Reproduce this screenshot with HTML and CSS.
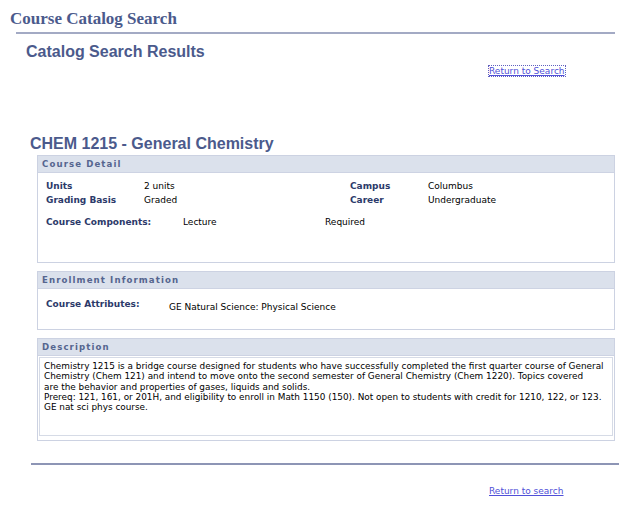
FILE: index.html
```html
<!DOCTYPE html>
<html lang="en">
  <head>
    <meta charset="UTF-8" />
    <title>Course Catalog Search</title>
    <link rel="stylesheet" href="styles.css">
  </head>
  <body>
    <div class="pagetitle">Course Catalog Search</div>
    <hr class="rule top" />
    <h1 class="subtitle">Catalog Search Results</h1>
    <div class="toplink"><a href="#" class="focused">Return to Search</a></div>

    <h2 class="course">CHEM 1215 - General Chemistry</h2>

    <div class="group detail">
      <div class="grouphead">Course Detail</div>
      <div class="groupbody">
        <div class="pairs">
          <div class="pair"><span class="lbl">Units</span><span class="val">2 units</span></div>
          <div class="pair right"><span class="lbl">Campus</span><span class="val">Columbus</span></div>
          <div class="pair"><span class="lbl">Grading Basis</span><span class="val">Graded</span></div>
          <div class="pair right"><span class="lbl">Career</span><span class="val">Undergraduate</span></div>
        </div>
        <div class="components">
          <span class="lbl">Course Components:</span>
          <span class="val comp">Lecture</span>
          <span class="val">Required</span>
        </div>
      </div>
    </div>

    <div class="group enroll">
      <div class="grouphead">Enrollment Information</div>
      <div class="groupbody">
        <div class="attrs">
          <span class="lbl">Course Attributes:</span>
          <span class="val">GE Natural Science: Physical Science</span>
        </div>
      </div>
    </div>

    <div class="group desc">
      <div class="grouphead">Description</div>
      <div class="descbox">Chemistry 1215 is a bridge course designed for students who have successfully completed the first quarter course of General Chemistry (Chem 121) and intend to move onto the second semester of General Chemistry (Chem 1220). Topics covered<br>are the behavior and properties of gases, liquids and solids.<br>Prereq: 121, 161, or 201H, and eligibility to enroll in Math 1150 (150). Not open to students with credit for 1210, 122, or 123. GE nat sci phys course.</div>
    </div>

    <hr class="rule bottom" />
    <div class="footlink"><a href="#">Return to search</a></div>
  </body>
</html>
```

FILE: styles.css
```css
body {
  margin: 0;
  width: 640px;
  font-family: "DejaVu Sans", Verdana, sans-serif;
  font-size: 9px;
  color: #000;
  background: #fff;
}

.pagetitle {
  font-family: "Liberation Serif", serif;
  font-weight: bold;
  font-size: 17px;
  color: #4b5a8c;
  padding: 9px 0 0 10px;
  height: 23px;
}

.rule {
  border: 0;
  height: 2px;
  background: #a3aac4;
  margin: 0;
}

.rule.top {
  margin-left: 16px;
  width: 599px;
}

.subtitle {
  font-family: "Liberation Sans", Arial, sans-serif;
  font-size: 16px;
  font-weight: bold;
  color: #4b5a8c;
  margin: 9px 0 0 26px;
}

.toplink {
  margin: 5px 0 0 489px;
}

a {
  color: #5050d8;
  font-size: 9px;
}

a.focused {
  outline: 1px dotted #6060c0;
}

.course {
  font-family: "Liberation Sans", Arial, sans-serif;
  font-size: 16px;
  font-weight: bold;
  color: #4b5a8c;
  margin: 59px 0 0 30px;
}

.group {
  margin-left: 37px;
  width: 578px;
  box-sizing: border-box;
  border: 1px solid #ccd2e2;
}

.detail {
  margin-top: 2px;
  height: 108px;
}

.enroll {
  margin-top: 8px;
  height: 59px;
}

.desc {
  margin-top: 8px;
  height: 103px;
}

.grouphead {
  background: #dbe1ec;
  border-bottom: 1px solid #cdd3e3;
  height: 16px;
  line-height: 16px;
  padding-left: 4px;
  font-weight: bold;
  font-size: 8.6px;
  letter-spacing: 1.1px;
  color: #55658f;
}

.groupbody {
  padding: 7px 0 0 8px;
}

.lbl {
  font-weight: bold;
  font-size: 9px;
  color: #2c3a6a;
}

.pairs {
  display: grid;
  grid-template-columns: 304px 1fr;
}

.pair {
  display: flex;
  height: 14px;
  line-height: 12px;
}

.pair .lbl {
  width: 98px;
}

.pair.right .lbl {
  width: 78px;
}

.components {
  display: flex;
  margin-top: 9px;
}

.components .lbl {
  width: 137px;
}

.components .comp {
  width: 142px;
}

.attrs {
  display: flex;
  padding-top: 3px;
}

.attrs .lbl {
  width: 123px;
}

.attrs .val {
  padding-top: 3px;
}

.descbox {
  margin: 1px 1px 0 1px;
  height: 79px;
  box-sizing: border-box;
  border: 1px solid #d6dbe6;
  padding: 3px 1px 3px 4px;
  line-height: 10.3px;
  font-size: 8.9px;
}

.rule.bottom {
  margin: 22px 0 0 31px;
  width: 588px;
  background: #8d95b5;
}

.footlink {
  margin: 21px 0 0 489px;
}
```
